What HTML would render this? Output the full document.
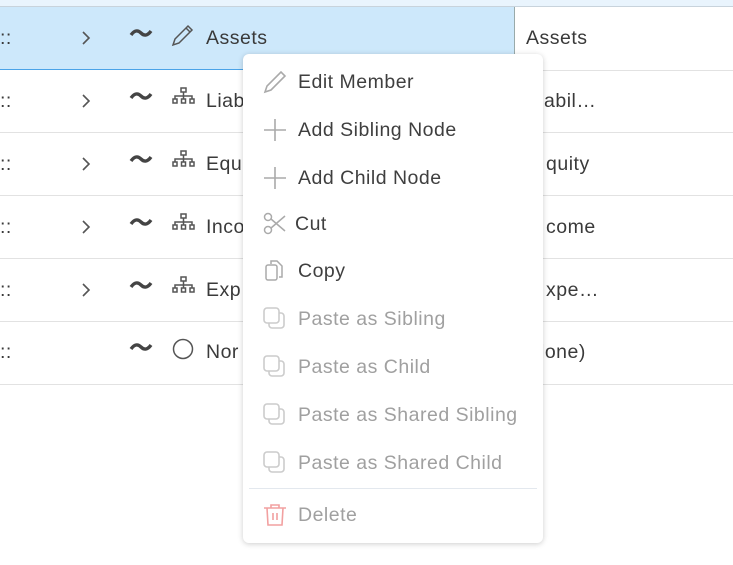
<!DOCTYPE html>
<html><head><style>
body{margin:0;width:733px;height:565px;background:#fff;font-family:"Liberation Sans",sans-serif;position:relative;overflow:hidden;color:#3a3a3a}
.top{position:absolute;left:0;top:0;width:733px;height:6px;background:#e9f4fd;border-bottom:1px solid #c8d3dc}
.row{position:absolute;left:0;width:733px;height:62px;border-bottom:1px solid #e2e2e2}
.row.sel{background:#cde8fb;border-bottom:1px solid #4aa3e8}
.row .sel2{position:absolute;left:514px;top:0;width:219px;height:63px;background:#fff;border-left:1px solid #9aa;border-bottom:1px solid #e2e2e2}
.menu{position:absolute;left:243px;top:54px;width:300px;height:489px;background:#fff;border-radius:6px;box-shadow:0 1px 6px rgba(0,0,0,.2)}
.mi{position:absolute;left:0;width:300px;height:30px;font-size:19.5px;letter-spacing:0.5px;color:#3f3f3f}
.mi span{position:absolute;left:55px;top:5px}
.mi svg{position:absolute;left:20px;top:3px}
.mi.dis{color:#a0a0a0}
</style></head><body>
<div class="top"></div>
<div class="row sel" style="top:7px"><div class="sel2"></div></div>
<div class="row" style="top:70px"></div>
<div class="row" style="top:133px"></div>
<div class="row" style="top:196px"></div>
<div class="row" style="top:259px"></div>
<div class="row" style="top:322px"></div>
<svg width="733" height="400" style="position:absolute;left:0;top:0" fill="none" stroke="#555" stroke-width="1.5">
<g font-family="Liberation Sans" font-size="19.5" letter-spacing="0.5" fill="#3a3a3a" stroke="none">
<text x="0" y="44">::</text><text x="0" y="107">::</text><text x="0" y="170">::</text><text x="0" y="233">::</text><text x="0" y="296">::</text><text x="0" y="358">::</text>
<text x="206" y="44">Assets</text><text x="206" y="107">Liab</text><text x="206" y="170">Equ</text><text x="206" y="233">Inco</text><text x="206" y="296">Exp</text><text x="206" y="358">Nor</text>
<text x="526" y="44">Assets</text><text x="544" y="107">abil…</text><text x="546" y="170">quity</text><text x="546" y="233">come</text><text x="546" y="296">xpe…</text><text x="540" y="358">lone)</text>
</g>
<g stroke-width="1.6"><path d="M83 32l6 6-6 6"/><path d="M83 95l6 6-6 6"/><path d="M83 158l6 6-6 6"/><path d="M83 221l6 6-6 6"/><path d="M83 284l6 6-6 6"/></g>
<g stroke="#444" stroke-width="3.4"><path d="M131 35q5-7 10-2t10-2"/><path d="M131 98q5-7 10-2t10-2"/><path d="M131 161q5-7 10-2t10-2"/><path d="M131 224q5-7 10-2t10-2"/><path d="M131 287q5-7 10-2t10-2"/><path d="M131 349q5-7 10-2t10-2"/></g>
<path d="M173 45l2-6 13-13 4 4-13 13z M186 28l4 4"/>
<g id="h"><rect x="181" y="88" width="5" height="4"/><path d="M183.5 92v3M175 99v-3h17v3M183.5 95v4"/><rect x="173" y="99" width="4" height="4"/><rect x="181.5" y="99" width="4" height="4"/><rect x="190" y="99" width="4" height="4"/></g>
<use href="#h" y="63"/><use href="#h" y="126"/><use href="#h" y="189"/>
<circle cx="183" cy="349" r="9.5"/>
</svg>
<div class="menu">
<div class="mi" style="top:12px"><svg width="26" height="26" fill="none" stroke="#aaa" stroke-width="1.6"><path d="M2 23l2-6 14-14 4 4-14 14z"/></svg><span>Edit Member</span></div>
<div class="mi" style="top:60px"><svg width="26" height="26" stroke="#aaa" stroke-width="1.6"><path d="M12 2v22M1 13h22"/></svg><span>Add Sibling Node</span></div>
<div class="mi" style="top:108px"><svg width="26" height="26" stroke="#aaa" stroke-width="1.6"><path d="M12 2v22M1 13h22"/></svg><span>Add Child Node</span></div>
<div class="mi" style="top:154px"><svg width="26" height="26" fill="none" stroke="#aaa" stroke-width="1.5"><circle cx="5" cy="6" r="3.5"/><circle cx="5" cy="19" r="3.5"/><path d="M8 8l14 12M8 17l14-12"/></svg><span style="left:52px">Cut</span></div>
<div class="mi" style="top:201px"><svg width="26" height="26" fill="none" stroke="#aaa" stroke-width="1.5"><path d="M8 6V3h6l5 5v11h-3"/><rect x="3" y="7" width="11" height="15" rx="2"/></svg><span>Copy</span></div>
<div class="mi dis" style="top:249px"><svg width="26" height="26" fill="none" stroke="#ccc" stroke-width="1.6"><rect x="1" y="2" width="15" height="15" rx="3"/><path d="M16 7h2a3 3 0 0 1 3 3v9a3 3 0 0 1-3 3H9a3 3 0 0 1-3-3v-2"/></svg><span>Paste as Sibling</span></div>
<div class="mi dis" style="top:297px"><svg width="26" height="26" fill="none" stroke="#ccc" stroke-width="1.6"><rect x="1" y="2" width="15" height="15" rx="3"/><path d="M16 7h2a3 3 0 0 1 3 3v9a3 3 0 0 1-3 3H9a3 3 0 0 1-3-3v-2"/></svg><span>Paste as Child</span></div>
<div class="mi dis" style="top:345px"><svg width="26" height="26" fill="none" stroke="#ccc" stroke-width="1.6"><rect x="1" y="2" width="15" height="15" rx="3"/><path d="M16 7h2a3 3 0 0 1 3 3v9a3 3 0 0 1-3 3H9a3 3 0 0 1-3-3v-2"/></svg><span>Paste as Shared Sibling</span></div>
<div class="mi dis" style="top:393px"><svg width="26" height="26" fill="none" stroke="#ccc" stroke-width="1.6"><rect x="1" y="2" width="15" height="15" rx="3"/><path d="M16 7h2a3 3 0 0 1 3 3v9a3 3 0 0 1-3 3H9a3 3 0 0 1-3-3v-2"/></svg><span>Paste as Shared Child</span></div>
<div style="position:absolute;left:6px;top:434px;width:288px;height:1px;background:#e3e8ee"></div>
<div class="mi dis" style="top:445px"><svg width="26" height="26" fill="none" stroke="#f2a0a0" stroke-width="1.6"><path d="M1 6h22M8 6V3h8v3M4 6l1 17h14l1-17M10 11v7M14 11v7"/></svg><span>Delete</span></div>
</div>
</body></html>
